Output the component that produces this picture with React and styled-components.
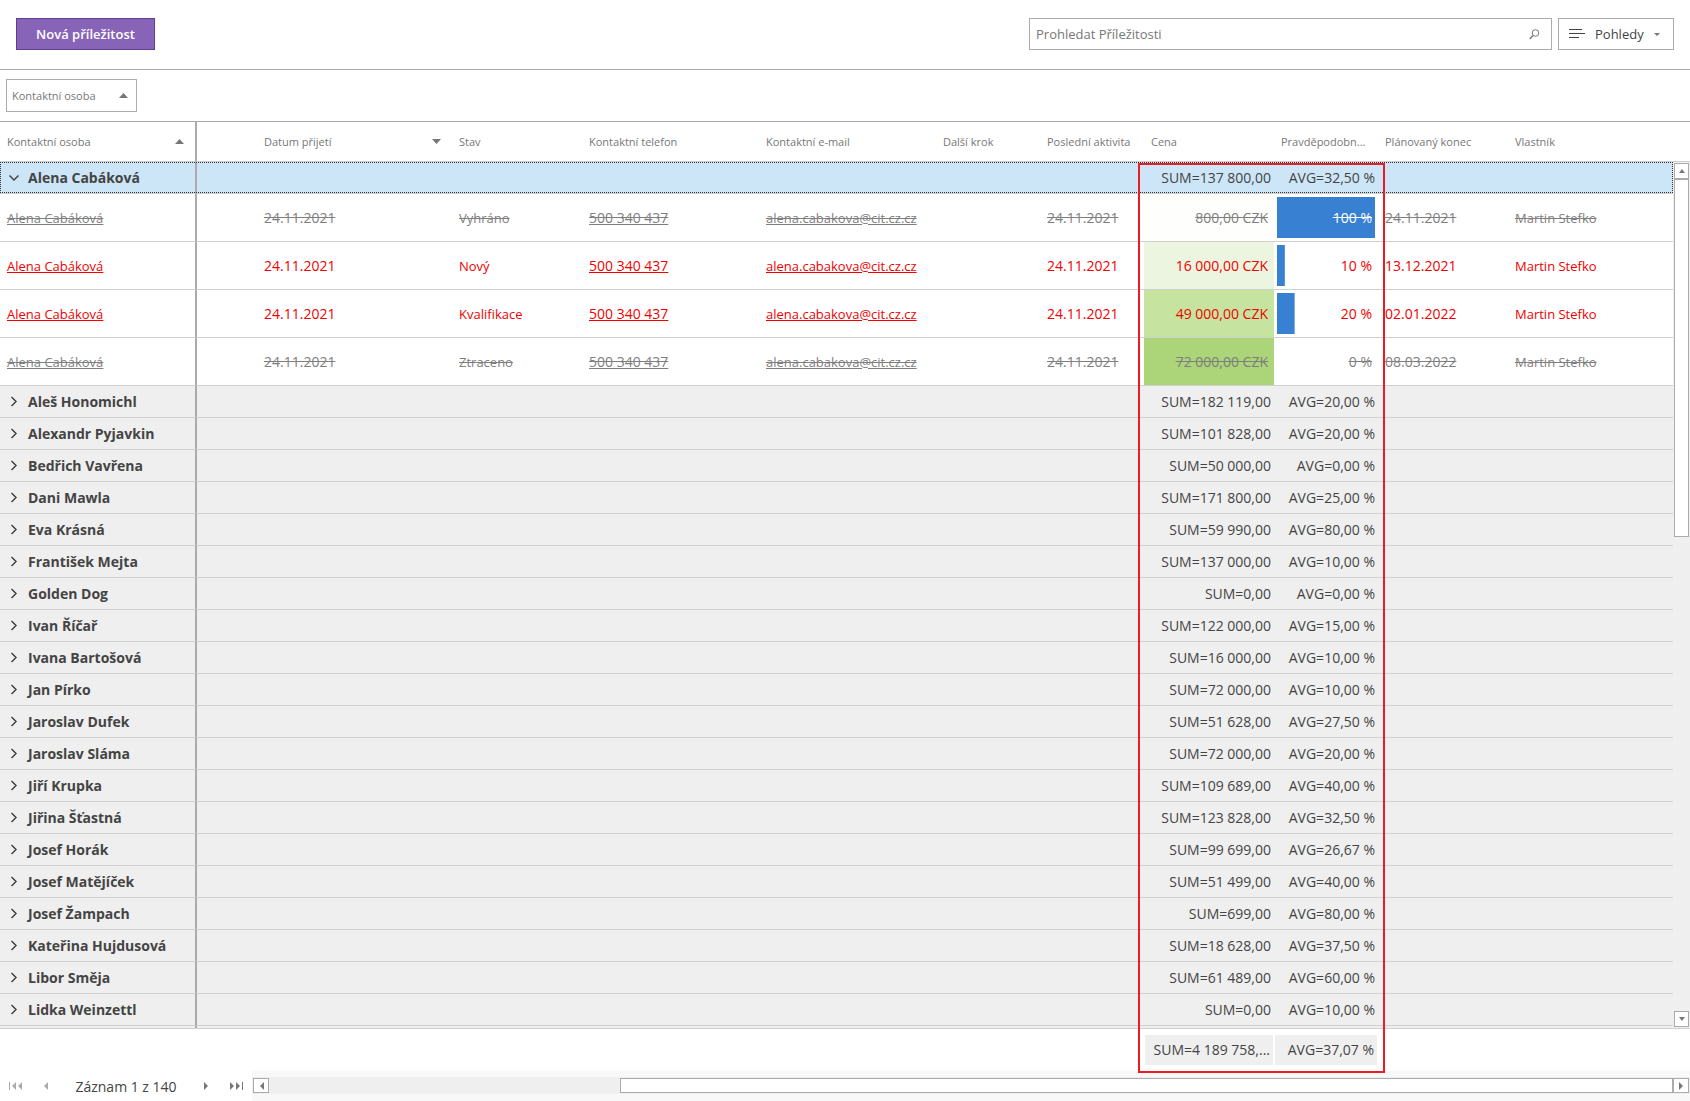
import React from "react";
import styled, { createGlobalStyle, css } from "styled-components";

const Global = createGlobalStyle`
  * { box-sizing: border-box; }
  html, body { margin: 0; background: #fff; }
  body, button, input { font-family: "Open Sans", "Noto Sans", sans-serif; font-size: 14px; color: #444; }
  button { padding: 0; cursor: pointer; }
`;

const line = "#ababab";
const rowLine = "#d0d0d0";
const shade = "#efefef";

const Page = styled.div`
  display: flex;
  flex-direction: column;
  height: 100vh;
  overflow: hidden;
`;

const Toolbar = styled.header`
  display: flex;
  justify-content: space-between;
  height: 70px;
  padding: 18px 16px;
  border-bottom: 1px solid ${line};
`;

const PrimaryButton = styled.button`
  width: 139px;
  height: 32px;
  border: 1px solid #5f3e94;
  background: #8764b8;
  color: #fff;
  font-size: 13px;
  font-weight: 600;
`;

const Tools = styled.div`
  display: flex;
  gap: 6px;
`;

const SearchBox = styled.label`
  display: flex;
  align-items: center;
  width: 523px;
  height: 32px;
  padding: 0 11px 0 6px;
  border: 1px solid ${line};
`;

const SearchInput = styled.input`
  flex: 1;
  min-width: 0;
  padding: 0;
  border: 0;
  outline: 0;
  font-size: 13px;
  &::placeholder { color: #777; opacity: 1; }
`;

const ViewsButton = styled.button`
  display: flex;
  align-items: center;
  width: 116px;
  height: 32px;
  padding: 0 13px 0 10px;
  border: 1px solid ${line};
  background: #fff;
  font-size: 13px;
  span { flex: 1; padding-left: 9px; text-align: left; }
`;

const GroupPanel = styled.div`
  height: 52px;
  padding: 9px 6px;
  border-bottom: 1px solid ${line};
`;

const GroupChip = styled.button`
  display: flex;
  align-items: center;
  justify-content: space-between;
  width: 131px;
  height: 33px;
  padding: 0 8px 0 5px;
  border: 1px solid ${line};
  background: #fff;
  color: #777;
  font-size: 11px;
`;

const GridFrame = styled.main`
  position: relative;
  display: flex;
  flex: 1;
  flex-direction: column;
  min-height: 0;
`;

const GridArea = styled.div`
  display: flex;
  flex: 1;
  min-height: 0;
  border-bottom: 1px solid ${rowLine};
`;

const Viewport = styled.div`
  flex: 1;
  min-width: 0;
  overflow: hidden;
`;

const Table = styled.table`
  width: 100%;
  table-layout: fixed;
  border-collapse: separate;
  border-spacing: 0;
`;

const HeadCell = styled.th`
  height: 40px;
  padding: 0 7px;
  border-bottom: 1px solid ${rowLine};
  color: #777;
  font-size: 11px;
  font-weight: 400;
  text-align: left;
  white-space: nowrap;
  &:first-child { border-right: 2px solid ${line}; }
`;

const HeadLabel = styled.div`
  display: flex;
  align-items: center;
  justify-content: space-between;
  padding-right: 4px;
`;

const Cell = styled.td`
  padding: 0 6px 0 7px;
  border-top: 1px solid ${rowLine};
  font-size: ${(p) => (p.$label ? 13 : 14)}px;
  text-align: ${(p) => (p.$right ? "right" : "left")};
  white-space: nowrap;
  &:first-child { border-right: 2px solid ${line}; }
  ${(p) => p.$fill && css`background: ${p.$fill};`}
`;

const GroupRow = styled.tr`
  height: ${(p) => (p.$focused ? 31 : 32)}px;
  background: ${(p) => (p.$focused ? "#cde6f7" : shade)};
  ${(p) => p.$focused && css`
    outline: 1px dotted #333;
    outline-offset: -1px;
    ${Cell} { border-top: 0; }
  `}
`;

const GroupSum = styled(Cell)`
  padding: 0 3px;
`;

const Toggle = styled.button`
  display: flex;
  align-items: center;
  gap: 9px;
  height: 20px;
  border: 0;
  background: none;
  font-weight: 700;
`;

const DataRow = styled.tr`
  height: 48px;
  color: ${(p) => (p.$closed ? "#7f7f7f" : "#f00000")};
  text-decoration: ${(p) => (p.$closed ? "line-through" : "none")};
`;

const Link = styled.a`
  color: inherit;
  text-decoration: underline;
`;

const BarCell = styled(Cell)`
  padding: 0 3px;
`;

const Bar = styled.div`
  height: 41px;
  padding-right: 3px;
  line-height: 41px;
  background: linear-gradient(#3880d2, #3880d2) no-repeat;
  color: ${(p) => (p.$full ? "#fff" : "inherit")};
  text-decoration: ${(p) => (p.$closed ? "line-through" : "none")};
`;

const ScrollColumn = styled.div`
  display: flex;
  flex-direction: column;
  width: 17px;
  background: ${shade};
`;

const ScrollCorner = styled.div`
  height: 40px;
  border-bottom: 1px solid ${rowLine};
  background: #fff;
`;

const VerticalRail = styled.div`
  display: flex;
  flex: 1;
  flex-direction: column;
  padding: 1px;
`;

const ScrollButton = styled.button`
  display: flex;
  flex: none;
  align-items: center;
  justify-content: center;
  width: ${(p) => (p.$wide ? 16 : 15)}px;
  height: ${(p) => (p.$wide ? 15 : 16)}px;
  border: 1px solid ${line};
  background: #fff;
  color: #777;
`;

const VerticalTrack = styled.div`
  flex: 1;
`;

const VerticalThumb = styled.div`
  width: 15px;
  height: 43%;
  border: 1px solid ${line};
  background: #fff;
`;

const Summary = styled.div`
  display: flex;
  height: 42px;
  padding: 6px 0 6px 1145px;
  gap: 2px;
`;

const SummaryCell = styled.div`
  width: ${(p) => p.$width}px;
  padding: 0 3px;
  background: ${shade};
  line-height: 30px;
  text-align: right;
  white-space: nowrap;
`;

const Highlight = styled.div`
  position: absolute;
  top: 41px;
  bottom: -2px;
  left: 1138px;
  width: 247px;
  border: 2px solid #ed1c24;
  pointer-events: none;
`;

const BottomBar = styled.footer`
  display: flex;
  height: 30px;
`;

const Pager = styled.nav`
  display: flex;
  align-items: center;
  width: 252px;
  padding: 0 8px;
`;

const PagerButton = styled.button`
  display: flex;
  flex: none;
  justify-content: ${(p) => (p.$end ? "flex-end" : "flex-start")};
  width: ${(p) => p.$width}px;
  border: 0;
  background: none;
  color: ${(p) => (p.disabled ? "#ababab" : "#777")};
`;

const PagerText = styled.span`
  flex: 1;
  text-align: center;
  white-space: nowrap;
`;

const HorizontalScroll = styled.div`
  flex: 1;
  padding: 6px 0 7px;
  background: #f8f8f8;
`;

const HorizontalRail = styled.div`
  display: flex;
  align-items: center;
  height: 17px;
  padding: 0 1px;
  background: ${shade};
`;

const HorizontalTrack = styled.div`
  display: flex;
  flex: 1;
  justify-content: flex-end;
`;

const HorizontalThumb = styled.div`
  width: 75%;
  height: 15px;
  border: 1px solid ${line};
  background: #fff;
`;

const shapes = {
  up: "M0 5 L5 0 L10 5 Z",
  down: "M0 0 L10 0 L5 5 Z",
};

function Arrow({ dir, width = 9, height = 5 }) {
  return (
    <svg width={width} height={height} viewBox="0 0 10 5" preserveAspectRatio="none" aria-hidden="true">
      <path d={shapes[dir]} fill="#777" />
    </svg>
  );
}

function SideArrow({ left, double }) {
  const width = double ? 14 : 5;
  return (
    <svg width={width} height="8" viewBox={`0 0 ${width} 8`} aria-hidden="true">
      <g fill="currentColor" transform={left ? `translate(${width} 0) scale(-1 1)` : undefined}>
        <path d="M0 0 L4 4 L0 8 Z" />
        {double && <path d="M6 0 L10 4 L6 8 Z M12 0 H13 V8 H12 Z" />}
      </g>
    </svg>
  );
}

function Chevron({ open }) {
  return (
    <svg width="12" height="12" viewBox="0 0 12 12" fill="none" stroke="#444" strokeWidth="1.5" aria-hidden="true">
      <path d={open ? "M2.5 3.5 L7 8 L11.5 3.5" : "M4.5 1 L9 5.5 L4.5 10"} />
    </svg>
  );
}

function SearchIcon() {
  return (
    <svg width="11" height="11" viewBox="0 0 11 11" fill="none" stroke="#777" aria-hidden="true">
      <circle cx="6.5" cy="4" r="3.3" />
      <path d="M4 6.5 L0.8 10" strokeWidth="1.4" />
    </svg>
  );
}

function MenuIcon() {
  return (
    <svg width="17" height="10" viewBox="0 0 17 10" fill="#444" aria-hidden="true">
      <path d="M0 0H13V1H0Z M0 4H16V5H0Z M0 8H10V9H0Z" />
    </svg>
  );
}

const columnWidths = [197, 60, 195, 130, 177, 177, 104, 104, 130, 104, 130, null];

const headings = [
  "", "Datum přijetí", "Stav", "Kontaktní telefon", "Kontaktní e-mail", "Další krok",
  "Poslední aktivita", "Cena", "Pravděpodobn...", "Plánovaný konec", "Vlastník",
];

const deals = [
  { state: "Vyhráno", closed: true, price: "800,00 CZK", fill: "#fefffc", chance: "100 %", bar: 100, end: "24.11.2021" },
  { state: "Nový", price: "16 000,00 CZK", fill: "#ecf5e0", chance: "10 %", bar: 8, end: "13.12.2021" },
  { state: "Kvalifikace", price: "49 000,00 CZK", fill: "#c6e3a0", chance: "20 %", bar: 18, end: "02.01.2022" },
  { state: "Ztraceno", closed: true, price: "72 000,00 CZK", fill: "#abd578", chance: "0 %", bar: 0, end: "08.03.2022" },
];

const groups = [
  ["Aleš Honomichl", "182 119,00", "20,00"],
  ["Alexandr Pyjavkin", "101 828,00", "20,00"],
  ["Bedřich Vavřena", "50 000,00", "0,00"],
  ["Dani Mawla", "171 800,00", "25,00"],
  ["Eva Krásná", "59 990,00", "80,00"],
  ["František Mejta", "137 000,00", "10,00"],
  ["Golden Dog", "0,00", "0,00"],
  ["Ivan Říčař", "122 000,00", "15,00"],
  ["Ivana Bartošová", "16 000,00", "10,00"],
  ["Jan Pírko", "72 000,00", "10,00"],
  ["Jaroslav Dufek", "51 628,00", "27,50"],
  ["Jaroslav Sláma", "72 000,00", "20,00"],
  ["Jiří Krupka", "109 689,00", "40,00"],
  ["Jiřina Šťastná", "123 828,00", "32,50"],
  ["Josef Horák", "99 699,00", "26,67"],
  ["Josef Matějíček", "51 499,00", "40,00"],
  ["Josef Žampach", "699,00", "80,00"],
  ["Kateřina Hujdusová", "18 628,00", "37,50"],
  ["Libor Směja", "61 489,00", "60,00"],
  ["Lidka Weinzettl", "0,00", "10,00"],
];

function Group({ name, sum, avg, open }) {
  return (
    <GroupRow $focused={open}>
      <Cell>
        <Toggle aria-expanded={!!open}>
          <Chevron open={open} />
          {name}
        </Toggle>
      </Cell>
      <Cell colSpan={7} />
      <GroupSum $right>SUM={sum}</GroupSum>
      <GroupSum $right>AVG={avg} %</GroupSum>
      <Cell />
      <Cell />
    </GroupRow>
  );
}

function Deal({ state, closed, price, fill, chance, bar, end }) {
  return (
    <DataRow $closed={closed}>
      <Cell $label><Link href="#contact">Alena Cabáková</Link></Cell>
      <Cell />
      <Cell>24.11.2021</Cell>
      <Cell $label>{state}</Cell>
      <Cell><Link href="tel:500340437">500 340 437</Link></Cell>
      <Cell $label><Link href="mailto:alena.cabakova@cit.cz.cz">alena.cabakova@cit.cz.cz</Link></Cell>
      <Cell />
      <Cell>24.11.2021</Cell>
      <Cell $right $fill={fill}>{price}</Cell>
      <BarCell $right>
        <Bar $full={bar === 100} $closed={closed} style={{ backgroundSize: `${bar}% 100%` }}>{chance}</Bar>
      </BarCell>
      <Cell>{end}</Cell>
      <Cell $label>Martin Stefko</Cell>
    </DataRow>
  );
}

export default function App() {
  return (
    <Page>
      <Global />
      <Toolbar>
        <PrimaryButton>Nová příležitost</PrimaryButton>
        <Tools>
          <SearchBox>
            <SearchInput type="text" placeholder="Prohledat Příležitosti" aria-label="Prohledat Příležitosti" />
            <SearchIcon />
          </SearchBox>
          <ViewsButton>
            <MenuIcon />
            <span>Pohledy</span>
            <Arrow dir="down" width={6} height={3} />
          </ViewsButton>
        </Tools>
      </Toolbar>
      <GroupPanel>
        <GroupChip>Kontaktní osoba<Arrow dir="up" /></GroupChip>
      </GroupPanel>
      <GridFrame>
        <GridArea>
          <Viewport>
            <Table>
              <colgroup>
                {columnWidths.map((w, i) => <col key={i} width={w || undefined} />)}
              </colgroup>
              <thead>
                <tr>
                  <HeadCell><HeadLabel>Kontaktní osoba<Arrow dir="up" /></HeadLabel></HeadCell>
                  {headings.map((h) => (
                    <HeadCell key={h}>
                      {h === "Datum přijetí" ? <HeadLabel>{h}<Arrow dir="down" /></HeadLabel> : h}
                    </HeadCell>
                  ))}
                </tr>
              </thead>
              <tbody>
                <Group name="Alena Cabáková" sum="137 800,00" avg="32,50" open />
                {deals.map((d) => <Deal key={d.state} {...d} />)}
                {groups.map(([name, sum, avg]) => <Group key={name} name={name} sum={sum} avg={avg} />)}
                <GroupRow><Cell /><Cell colSpan={11} /></GroupRow>
              </tbody>
            </Table>
          </Viewport>
          <ScrollColumn>
            <ScrollCorner />
            <VerticalRail>
              <ScrollButton aria-label="Nahoru"><Arrow dir="up" width={6} height={4} /></ScrollButton>
              <VerticalTrack><VerticalThumb /></VerticalTrack>
              <ScrollButton aria-label="Dolů"><Arrow dir="down" width={6} height={4} /></ScrollButton>
            </VerticalRail>
          </ScrollColumn>
        </GridArea>
        <Summary>
          <SummaryCell $width={128}>SUM=4 189 758,...</SummaryCell>
          <SummaryCell $width={102}>AVG=37,07 %</SummaryCell>
        </Summary>
        <Highlight />
      </GridFrame>
      <BottomBar>
        <Pager>
          <PagerButton $width={35} disabled aria-label="První"><SideArrow left double /></PagerButton>
          <PagerButton $width={12} disabled aria-label="Předchozí"><SideArrow left /></PagerButton>
          <PagerText>Záznam 1 z 140</PagerText>
          <PagerButton $width={12} $end aria-label="Další"><SideArrow /></PagerButton>
          <PagerButton $width={35} $end aria-label="Poslední"><SideArrow double /></PagerButton>
        </Pager>
        <HorizontalScroll>
          <HorizontalRail>
            <ScrollButton $wide aria-label="Vlevo"><SideArrow left /></ScrollButton>
            <HorizontalTrack><HorizontalThumb /></HorizontalTrack>
            <ScrollButton $wide aria-label="Vpravo"><SideArrow /></ScrollButton>
          </HorizontalRail>
        </HorizontalScroll>
      </BottomBar>
    </Page>
  );
}
